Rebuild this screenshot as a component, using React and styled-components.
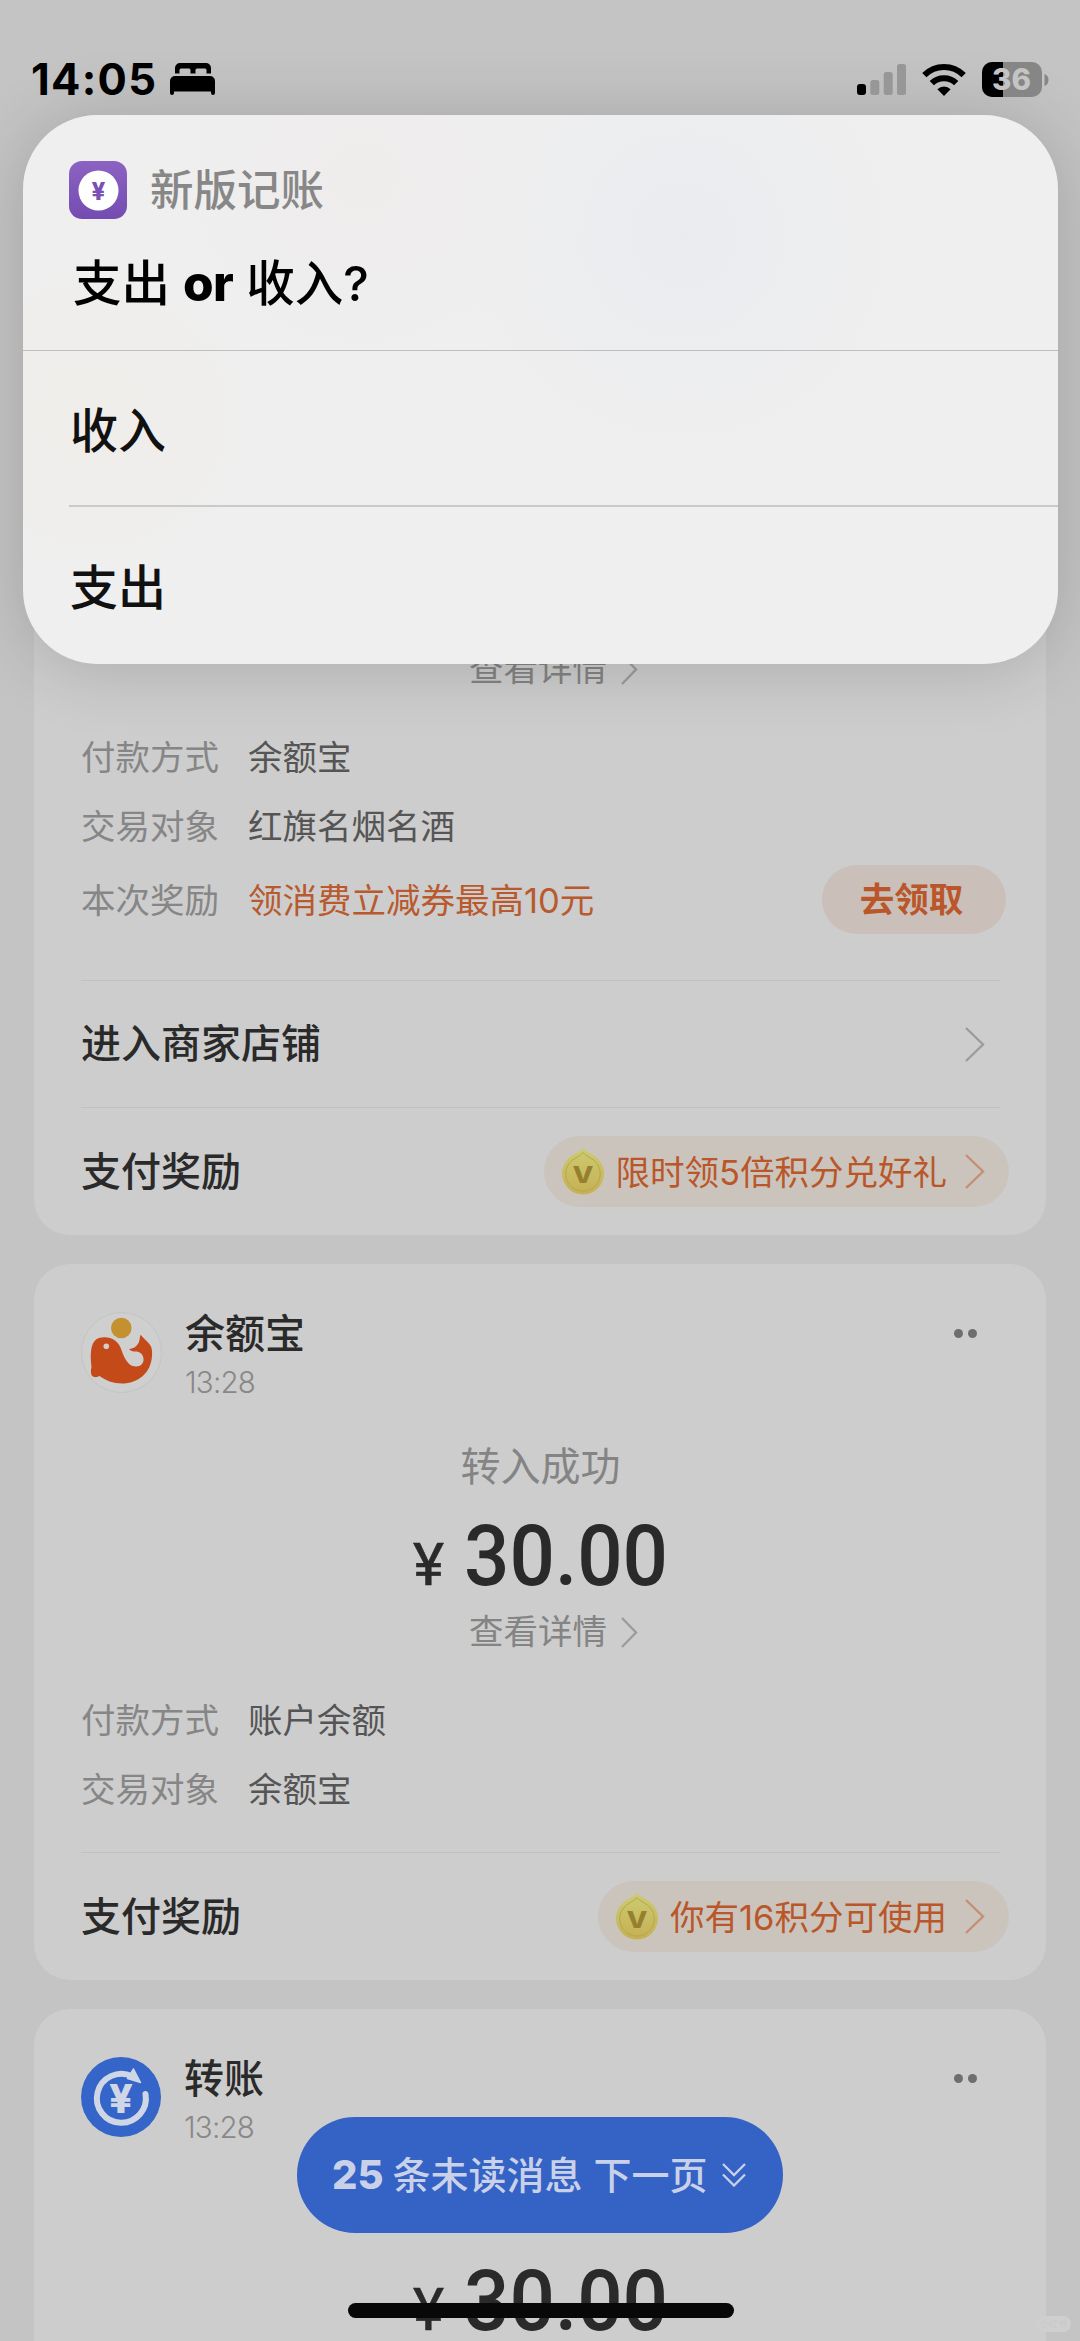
import React from 'react';
import styled, { createGlobalStyle } from 'styled-components';

const GlobalStyle = createGlobalStyle`
  body {
    margin: 0;
    background-color: #c4c4c4;
  }

  * {
    box-sizing: border-box;
  }
`;

const Screen = styled.div`
  position: relative;
  width: 1080px;
  height: 2341px;
  overflow: hidden;
  background-color: #c4c4c4;
  color: #2a2a2a;
  font-family: Inter, 'Noto Sans CJK SC', sans-serif;
  line-height: 1;
  white-space: nowrap;

  svg {
    display: block;
    flex-shrink: 0;
  }
`;

const StatusBar = styled.header`
  position: relative;
  z-index: 3;
  display: flex;
  align-items: center;
  height: 115px;
  padding: 43px 31px 0 31px;
  color: #000;
`;

const Clock = styled.span`
  width: 139px;
  font-size: 43.5px;
  font-weight: 750;
  letter-spacing: 1.3px;
  line-height: 60px;
`;

const StatusIcons = styled.div`
  display: flex;
  align-items: center;
  gap: 16px;
  margin-left: auto;
`;

const Sheet = styled.section`
  position: absolute;
  top: 115px;
  left: 23px;
  z-index: 2;
  width: 1035px;
  height: 549px;
  border-radius: 74px;
  background:
    radial-gradient(circle at 340px 60px, rgba(238, 230, 230, 0.4), transparent 190px),
    radial-gradient(circle at 660px 120px, rgba(229, 232, 240, 0.5), transparent 230px),
    radial-gradient(circle at 70px 300px, rgba(240, 235, 228, 0.5), transparent 170px),
    #efefef;
  box-shadow: 0 4px 70px rgba(0, 0, 0, 0.17);
`;

const SheetTop = styled.div`
  height: 236px;
  padding: 46px 46px 0;
  border-bottom: 1px solid #bcbfbe;
`;

const AppRow = styled.div`
  display: flex;
  align-items: center;
  gap: 23px;
  height: 58px;
  color: #878787;
  font-size: 43.5px;
  font-weight: 500;

  span {
    padding-top: 2px;
  }
`;

const Question = styled.h1`
  margin: 28px 0 0 4px;
  color: #000;
  font-size: 48.5px;
  font-weight: 500;
  line-height: 72px;

  b {
    font-size: 49.5px;
    font-weight: 800;
    letter-spacing: -0.5px;
  }
`;

const Option = styled.div`
  display: flex;
  align-items: center;
  height: 156px;
  margin-left: 46px;
  padding: 6px 0 0 1px;
  border-bottom: ${props => (props.$last ? 'none' : '2px solid #c9cbca')};
  color: #111;
  font-size: 48px;
  font-weight: 500;
`;

const Feed = styled.main`
  display: flex;
  flex-direction: column;
  gap: 29px;
  padding: 186px 34px 0;
`;

const Card = styled.article`
  display: flex;
  flex-direction: column;
  flex-shrink: 0;
  justify-content: ${props => (props.$tail ? 'flex-end' : 'flex-start')};
  height: ${props => props.$height}px;
  padding: ${props => (props.$tail ? 0 : 48)}px 46px 0 47px;
  border-radius: 36px;
  background-color: #cdcdcd;
`;

const CardHeader = styled.div`
  display: flex;
  height: 81px;
`;

const Sender = styled.div`
  flex: 1;
  margin-left: 23px;
`;

const SenderName = styled.div`
  padding-top: 2px;
  font-size: 40px;
  font-weight: 500;
  line-height: 40px;
`;

const SentAt = styled.div`
  margin-top: 9px;
  color: #888;
  font-size: 29.5px;
  font-weight: 350;
  letter-spacing: -0.8px;
  line-height: 38px;
`;

const Dots = styled.div`
  display: flex;
  gap: 5px;
  margin: 17px 23px 0 0;

  i {
    width: 9px;
    height: 9px;
    border-radius: 50%;
    background-color: #6e6e6e;
  }
`;

const State = styled.div`
  margin-top: 49px;
  color: #848484;
  font-size: 40px;
  line-height: 50px;
  text-align: center;
`;

const Amount = styled.div`
  display: flex;
  align-items: baseline;
  justify-content: center;
  height: 80px;
  margin-top: ${props => props.$top}px;
  padding-right: 2px;
  font-family: Roboto, sans-serif;
  font-size: 86px;
  font-weight: 500;
  line-height: 80px;
`;

const Currency = styled.span`
  margin-right: 20px;
  font-size: 59px;
  font-weight: 400;
  -webkit-text-stroke: 0.6px #2a2a2a;
`;

const Figure = styled.span`
  display: inline-block;
  width: 202px;
  transform: scaleX(0.93);
  transform-origin: left;
`;

const DetailLink = styled.div`
  display: flex;
  align-items: center;
  justify-content: center;
  gap: 14px;
  height: 50px;
  margin-top: ${props => props.$top}px;
  padding-left: 26px;
  color: #848484;
  font-size: 34.5px;

  span {
    padding-top: 1px;
  }
`;

const Details = styled.dl`
  margin: 28px 0 ${props => (props.$reward ? 40 : 29)}px;
`;

const DetailRow = styled.div`
  display: flex;
  align-items: center;
  height: ${props => (props.$reward ? 80 : 69)}px;
  color: ${props => (props.$reward ? '#b9592e' : '#555')};
  font-size: 34.5px;

  dt {
    width: 167px;
    padding-top: 3px;
    color: #868686;
  }

  dd {
    flex: 1;
    margin: 0;
    padding-top: 3px;
  }
`;

const ClaimButton = styled.button`
  width: 184px;
  height: 69px;
  margin: -1px -6px 0 0;
  padding: 1px 5px 0 0;
  border: none;
  border-radius: 35px;
  background-color: #cac0b9;
  color: #b9572a;
  font: inherit;
  font-weight: 600;
`;

const ActionRow = styled.div`
  display: flex;
  align-items: center;
  justify-content: space-between;
  height: ${props => props.$height}px;
  padding-right: ${props => (props.$plain ? 15 : 0)}px;
  border-top: 1px solid #c0c2c1;
  font-size: 40px;
  font-weight: 500;
`;

const Bonus = styled.div`
  display: flex;
  align-items: center;
  height: 71px;
  margin-right: -9px;
  padding: 0 24px 0 18px;
  border-radius: 36px;
  background-color: #cbc4bc;
  color: #b9572a;
  font-size: 34.5px;
  font-weight: 400;

  span {
    margin: 0 18px 0 12px;
    padding-top: 3px;
  }
`;

const NextPage = styled.div`
  position: absolute;
  top: 2117px;
  left: 297px;
  z-index: 1;
  display: flex;
  align-items: center;
  width: 486px;
  height: 116px;
  padding-left: 35px;
  border-radius: 58px;
  background-color: #3462c5;
  color: #c9d1e8;
  font-size: 38px;
  font-weight: 500;

  b {
    margin-right: 9px;
    font-size: 40px;
    font-weight: 800;
  }

  span + span {
    margin: 0 14px 0 11px;
  }
`;

const HomeBar = styled.div`
  position: absolute;
  bottom: 23px;
  left: 348px;
  z-index: 2;
  width: 386px;
  height: 15px;
  border-radius: 8px;
  background-color: #080808;
`;

const Watermark = styled.div`
  position: absolute;
  right: 9px;
  bottom: 9px;
  width: 35px;
  height: 16px;
  border-radius: 8px;
  background-color: #cfcfcf;
  color: #c8c8c8;
  font-size: 9px;
  line-height: 16px;
  text-align: center;
`;

const Chevron = ({ width = 20, height = 35, color = '#9c9c9c' }) => (
  <svg width={width} height={height} fill="none" stroke={color} strokeWidth="2.4">
    <path d={`M1 1L${width - 2} ${height / 2}L1 ${height - 1}`} />
  </svg>
);

const BedIcon = () => (
  <svg width="45" height="32" viewBox="0 0 45 32">
    <path d="M5 10.5V5a5 5 0 0 1 5-5h26a5 5 0 0 1 5 5v5.500h-4.500V7a1.500 1.500 0 0 0-1.500-1.500h-8a1.500 1.500 0 0 0-1.500 1.500v3.500h-5V7a1.500 1.500 0 0 0-1.500-1.500h-8A1.500 1.500 0 0 0 9.500 7v3.500z" />
    <path d="M0 30V18a5 5 0 0 1 5-5h35a5 5 0 0 1 5 5v12a2 2 0 0 1-4 0v-1.500H4V30a2 2 0 0 1-4 0z" />
  </svg>
);

const SignalIcon = () => (
  <svg width="49" height="31" viewBox="0 0 49 31">
    <rect y="20" width="9" height="11" rx="3" />
    <g fill="#979797">
      <rect x="13.300" y="16" width="9" height="15" rx="2.500" />
      <rect x="26.700" y="8" width="9" height="23" rx="2.500" />
      <rect x="40" width="9" height="31" rx="2.500" />
    </g>
  </svg>
);

const WifiIcon = () => (
  <svg width="44" height="33" viewBox="0 0 44 33">
    <g fill="none" stroke="#000" strokeWidth="6">
      <path d="M2.300 12.200a27.800 27.800 0 0 1 39.400 0" />
      <path d="M9.800 20.200a17.300 17.300 0 0 1 24.400 0" />
    </g>
    <path d="M22 33l-6.600-6.700a9.300 9.300 0 0 1 13.200 0z" />
  </svg>
);

const BatteryIcon = () => (
  <svg width="67" height="35" viewBox="0 0 67 35">
    <clipPath id="battery">
      <rect width="60" height="35" rx="10" />
    </clipPath>
    <g clipPath="url(#battery)">
      <rect width="60" height="35" fill="#868686" />
      <rect width="21" height="35" />
    </g>
    <path d="M62.500 12q4 1.500 4 6t-4 6z" fill="#868686" />
    <text x="29.500" y="28" fill="#c4c4c4" fontSize="29.500" fontWeight="800" textAnchor="middle">36</text>
  </svg>
);

const LedgerIcon = () => (
  <svg width="58" height="58" viewBox="0 0 58 58">
    <defs>
      <linearGradient id="ledger" x2="0" y2="1">
        <stop stopColor="#8c63c2" />
        <stop offset="1" stopColor="#744cb1" />
      </linearGradient>
    </defs>
    <rect width="58" height="58" rx="13" fill="url(#ledger)" />
    <circle cx="29.500" cy="29.500" r="20" fill="#fff" />
    <text x="29.500" y="38.500" fill="#7a50b5" fontSize="24" fontWeight="800" textAnchor="middle">¥</text>
  </svg>
);

const CoinIcon = () => (
  <svg width="42" height="47" viewBox="0 0 42 47">
    <defs>
      <linearGradient id="coin" x2="0" y2="1">
        <stop stopColor="#cccb72" />
        <stop offset="1" stopColor="#c6b054" />
      </linearGradient>
    </defs>
    <path d="M21 0c3 4 8 5 13 9a21 21 0 1 1-26 0c5-4 10-5 13-9z" fill="url(#coin)" />
    <path d="M21 4.500c3 3.500 7 5 10.500 7.600a17.300 17.300 0 1 1-21 0C14 9.500 18 8 21 4.500z" fill="none" stroke="#b5a84a" strokeWidth="1" />
    <text x="10.500" y="35" fill="#96802f" fontSize="22.500" fontWeight="800" textLength="21" lengthAdjust="spacingAndGlyphs">V</text>
  </svg>
);

const WhaleAvatar = () => (
  <svg width="81" height="81" viewBox="0 0 81 81">
    <circle cx="40.500" cy="40.500" r="40" fill="#cfcfcf" stroke="#c4c4c4" />
    <circle cx="40.300" cy="16" r="10.300" fill="#c3912f" />
    <path
      fill="#c44a1a"
      d="M10.500 55C9.500 48 9.500 41 10.500 36c1.500-7 6-11 11-10.500 8-1 15 3 18 10 3 8 6.500 19 15.500 19 5 0 8-3.500 7.500-8-.5-4.500-4-7-8-7-2.500 0-5-.5-6.500-2.500 5-.5 8-3 9.700-6.500 1.300-3 .8-5.500 2-7.800 3 4.500 8.500 7.300 10.500 12.300 1 3 1 6 .800 9C70 61 57 71.500 41 71.500c-9 0-16.500-3-22.500-7.500-2.500 1.500-5.500 1.500-7.500 0-1.500-3-1.300-6-.5-9z"
    />
    <circle cx="25.300" cy="34.300" r="2.800" fill="#cfcfcf" />
  </svg>
);

const TransferAvatar = () => (
  <svg width="80" height="80" viewBox="0 0 80 80">
    <circle cx="40" cy="40" r="40" fill="#3565c8" />
    <path d="M51 19.200A24.500 24.500 0 1 0 64.500 37" fill="none" stroke="#cfd6e6" strokeWidth="6" strokeLinecap="round" />
    <path d="M52.500 12l7 13.500-13-4z" fill="#cfd6e6" stroke="#cfd6e6" strokeWidth="1.500" strokeLinejoin="round" />
    <text x="40" y="56" fill="#cfd6e6" fontSize="40" fontWeight="800" textAnchor="middle" textLength="24" lengthAdjust="spacingAndGlyphs">¥</text>
  </svg>
);

const DoubleChevron = () => (
  <svg width="24" height="24" fill="none" stroke="#c9d1e8" strokeWidth="2.300">
    <path d="M1 1l11 11L23 1M1 11.500l11 11 11-11" />
  </svg>
);

const Header = ({ icon, name, time }) => (
  <CardHeader>
    {icon}
    <Sender>
      <SenderName>{name}</SenderName>
      <SentAt>{time}</SentAt>
    </Sender>
    <Dots><i /><i /></Dots>
  </CardHeader>
);

const Money = ({ top, value }) => (
  <Amount $top={top}>
    <Currency>¥</Currency>
    <Figure>{value}</Figure>
  </Amount>
);

const ViewDetail = ({ top = 0 }) => (
  <DetailLink $top={top}>
    <span>查看详情</span>
    <Chevron width={17} height={31} />
  </DetailLink>
);

const BonusLink = ({ text }) => (
  <Bonus>
    <CoinIcon />
    <span>{text}</span>
    <Chevron color="#c48f75" />
  </Bonus>
);

const App = () => (
  <Screen>
    <GlobalStyle />
    <StatusBar>
      <Clock>14:05</Clock>
      <BedIcon />
      <StatusIcons>
        <SignalIcon />
        <WifiIcon />
        <BatteryIcon />
      </StatusIcons>
    </StatusBar>

    <Sheet>
      <SheetTop>
        <AppRow>
          <LedgerIcon />
          <span>新版记账</span>
        </AppRow>
        <Question>支出 <b>or</b> 收入?</Question>
      </SheetTop>
      <Option>收入</Option>
      <Option $last>支出</Option>
    </Sheet>

    <Feed>
      <Card $tail $height={934}>
        <ViewDetail />
        <Details $reward>
          <DetailRow><dt>付款方式</dt><dd>余额宝</dd></DetailRow>
          <DetailRow><dt>交易对象</dt><dd>红旗名烟名酒</dd></DetailRow>
          <DetailRow $reward>
            <dt>本次奖励</dt>
            <dd>领消费立减券最高10元</dd>
            <ClaimButton>去领取</ClaimButton>
          </DetailRow>
        </Details>
        <ActionRow $plain $height={127}>
          进入商家店铺
          <Chevron />
        </ActionRow>
        <ActionRow $height={128}>
          支付奖励
          <BonusLink text="限时领5倍积分兑好礼" />
        </ActionRow>
      </Card>

      <Card $height={716}>
        <Header icon={<WhaleAvatar />} name="余额宝" time="13:28" />
        <State>转入成功</State>
        <Money top={24} value="30.00" />
        <ViewDetail top={11} />
        <Details>
          <DetailRow><dt>付款方式</dt><dd>账户余额</dd></DetailRow>
          <DetailRow><dt>交易对象</dt><dd>余额宝</dd></DetailRow>
        </Details>
        <ActionRow $height={128}>
          支付奖励
          <BonusLink text="你有16积分可使用" />
        </ActionRow>
      </Card>

      <Card $height={716}>
        <Header icon={<TransferAvatar />} name="转账" time="13:28" />
        <Money top={123} value="30.00" />
      </Card>
    </Feed>

    <NextPage>
      <b>25</b>
      <span>条未读消息</span>
      <span>下一页</span>
      <DoubleChevron />
    </NextPage>
    <HomeBar />
    <Watermark>小红书</Watermark>
  </Screen>
);

export default App;
